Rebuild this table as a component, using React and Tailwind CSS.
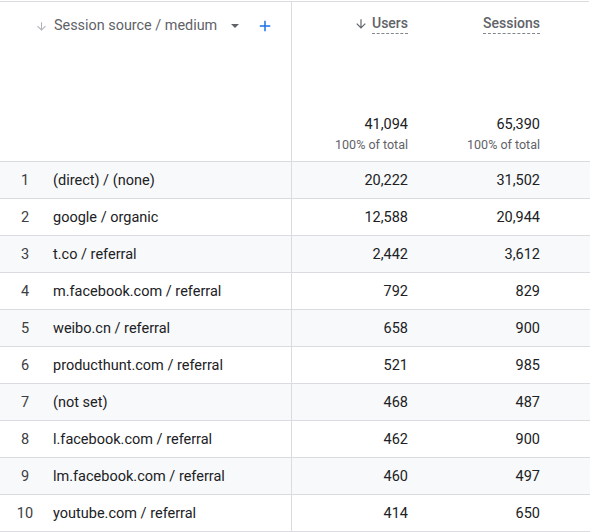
import React from 'react';

const rows = [
  ['(direct) / (none)', '20,222', '31,502'],
  ['google / organic', '12,588', '20,944'],
  ['t.co / referral', '2,442', '3,612'],
  ['m.facebook.com / referral', '792', '829'],
  ['weibo.cn / referral', '658', '900'],
  ['producthunt.com / referral', '521', '985'],
  ['(not set)', '468', '487'],
  ['l.facebook.com / referral', '462', '900'],
  ['lm.facebook.com / referral', '460', '497'],
  ['youtube.com / referral', '414', '650'],
];

const ArrowDown = ({ className }) => (
  <svg viewBox="0 0 24 24" className={className} fill="currentColor">
    <path d="M20 12l-1.41-1.41L13 16.17V4h-2v12.17l-5.58-5.59L4 12l8 8 8-8z" />
  </svg>
);

const App = () => {
  return (
    <div
      className="w-[590px] h-[532px] overflow-hidden bg-white text-[#202124] text-[14.5px]"
      style={{ fontFamily: 'Roboto, "Liberation Sans", sans-serif' }}
    >
      <div className="mt-px border-t border-[#dadce0] w-[589px]" />
      {/* header */}
      <div className="flex h-[160px] border-b border-[#dadce0]">
        <div className="w-[292px] border-r border-[#dadce0] shrink-0 flex items-start pt-[14px] pl-[35px]">
          <ArrowDown className="w-[13px] h-[13px] text-[#b0b3b8] mt-[4px]" />
          <span className="ml-[6px] text-[#5f6368] text-[14.4px] leading-[20px]">Session source / medium</span>
          <span className="ml-[14px] mt-[8px] w-0 h-0 border-l-[4.5px] border-r-[4.5px] border-t-[4.5px] border-l-transparent border-r-transparent border-t-[#5f6368]" />
          <svg viewBox="0 0 24 24" className="ml-[17px] mt-[1px] w-[18px] h-[18px] text-[#1a73e8]" fill="currentColor">
            <path d="M19 13h-6v6h-2v-6H5v-2h6V5h2v6h6v2z" />
          </svg>
        </div>
        <div className="flex flex-col">
          <div className="flex pt-[11px]">
            <div className="w-[116px] flex justify-end items-start">
              <ArrowDown className="w-[14px] h-[14px] text-[#5f6368] mt-[4px] mr-[4px]" />
              <span className="font-medium text-[#5f6368] text-[14px] leading-[20px] border-b border-dashed border-[#80868b]">Users</span>
            </div>
            <div className="w-[132px] flex justify-end">
              <span className="font-medium text-[#5f6368] text-[14px] leading-[20px] border-b border-dashed border-[#80868b]">Sessions</span>
            </div>
          </div>
          <div className="flex mt-[81px]">
            <div className="w-[116px] text-right">
              <div className="leading-[20px] text-[#202124]">41,094</div>
              <div className="text-[12.5px] text-[#5f6368] leading-[16px] mt-[2px]">100% of total</div>
            </div>
            <div className="w-[132px] text-right">
              <div className="leading-[20px] text-[#202124]">65,390</div>
              <div className="text-[12.5px] text-[#5f6368] leading-[16px] mt-[2px]">100% of total</div>
            </div>
          </div>
        </div>
      </div>
      {/* rows */}
      {rows.map(([label, users, sessions], i) => (
        <div
          key={label}
          className={`flex h-[37px] pt-px leading-[20px] border-b border-[#dadce0] ${i % 2 === 0 ? 'bg-[#f8f9fa]' : 'bg-white'}`}
        >
          <div className="w-[292px] shrink-0 border-r border-[#dadce0] -mt-px flex items-center pt-px">
            <span className="w-[20px] ml-[15px] text-center text-[#3c4043]">{i + 1}</span>
            <span className="ml-[18px]">{label}</span>
          </div>
          <div className="w-[116px] flex items-center justify-end">{users}</div>
          <div className="w-[132px] flex items-center justify-end">{sessions}</div>
        </div>
      ))}
    </div>
  );
};

export default App;
